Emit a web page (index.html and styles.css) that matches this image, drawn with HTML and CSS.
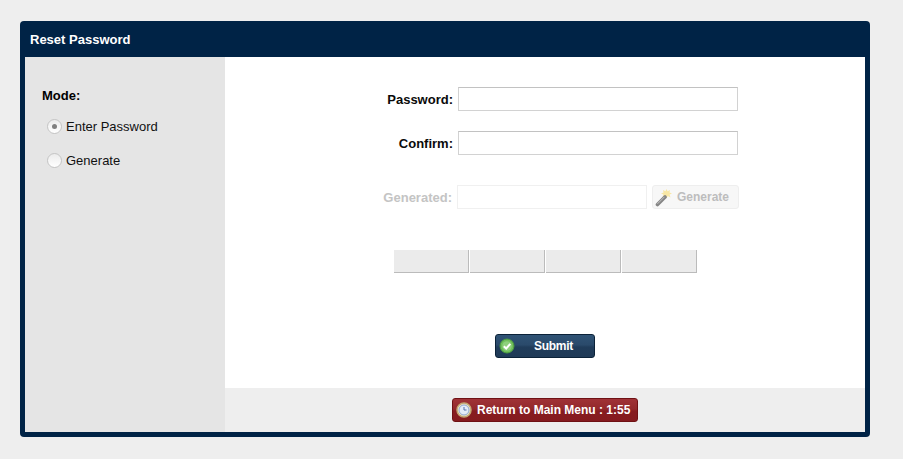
FILE: index.html
```html
<!DOCTYPE html>
<html lang="en">
<head>
    <meta charset="UTF-8">
    <meta name="viewport" content="width=device-width, initial-scale=1.0">
    <title>Reset Password</title>
    <link rel="stylesheet" href="styles.css">
</head>
<body>
    <div class="panel">
        <div class="panel-title">Reset Password</div>
        <div class="panel-body">
            <div class="side">
                <div class="mode-title">Mode:</div>
                <label class="mode-row"><span class="radio radio-on"></span>Enter Password</label>
                <label class="mode-row"><span class="radio"></span>Generate</label>
            </div>
            <div class="main">
                <div class="form">
                    <div class="row row-pass">
                        <label class="lbl">Password:</label>
                        <input class="txt" type="password">
                    </div>
                    <div class="row row-confirm">
                        <label class="lbl">Confirm:</label>
                        <input class="txt" type="password">
                    </div>
                    <div class="row row-gen">
                        <label class="lbl lbl-off">Generated:</label>
                        <input class="txt txt-off" type="text" disabled>
                        <div class="gen-btn">
                            <svg class="wand" width="18" height="18" viewBox="0 0 18 18">
                                <path d="M11.500 0 L12.600 2.200 L15 1 L14.500 3.400 L17 4.500 L14.600 5.600 L15.500 8.500 L12.800 7 L11.500 9.500 L10.200 7 L7.500 8.500 L8.400 5.600 L6 4.500 L8.500 3.400 L8 1 L10.400 2.200 Z" fill="#f8e7a4"/>
                                <path d="M2.500 15.500 L10 8" stroke="#858585" stroke-width="3.600" stroke-linecap="round"/>
                                <path d="M2.500 14.800 L9.500 7.800" stroke="#c4c4c4" stroke-width="1"/>
                            </svg>
                            <span>Generate</span>
                        </div>
                    </div>
                </div>
                <div class="meter">
                    <div class="cell"></div>
                    <div class="cell"></div>
                    <div class="cell"></div>
                    <div class="cell"></div>
                </div>
                <div class="submit-wrap">
                    <div class="btn btn-submit">
                        <svg class="btn-icon" width="16" height="16" viewBox="0 0 16 16">
                            <circle cx="8" cy="8" r="7" fill="#6fbf5a" stroke="#4b9a3f"/>
                            <circle cx="8" cy="8" r="4.800" fill="#8ed07c"/>
                            <path d="M4.800 8.200 L7.200 10.500 L11.300 5.800" fill="none" stroke="#fff" stroke-width="2"/>
                        </svg>
                        <span class="submit-text">Submit</span>
                    </div>
                </div>
                <div class="foot">
                    <div class="btn btn-return">
                        <svg class="btn-icon" width="16" height="16" viewBox="0 0 16 16">
                            <circle cx="8" cy="8" r="7" fill="#e9e2c8" stroke="#c2a873" stroke-width="1.500"/>
                            <circle cx="8" cy="8" r="5" fill="#e4ecf8" stroke="#8fa8d2"/>
                            <path d="M8 5 V8 H10.500" fill="none" stroke="#5673ab" stroke-width="1"/>
                        </svg>
                        <span>Return to Main Menu : 1:55</span>
                    </div>
                </div>
            </div>
        </div>
    </div>
</body>
</html>
```

FILE: styles.css
```css
*{
    box-sizing: border-box;
}
html, body{
    margin: 0;
    padding: 0;
    height: 100%;
}
body{
    background-color: #eeeeee;
    padding: 21px 33px 0 20px;
    font-family: "Liberation Sans", Arial, sans-serif;
    font-size: 13px;
    color: #000000;
    overflow: hidden;
}
.panel{
    width: 850px;
    height: 416px;
    display: flex;
    flex-direction: column;
    background-color: #002346;
    border-radius: 4px;
    padding: 0 5px 5px;
}
.panel-title{
    height: 36px;
    line-height: 37px;
    padding-left: 5px;
    color: #ffffff;
    font-weight: bold;
}
.panel-body{
    flex: 1;
    display: flex;
}

/* left column */
.side{
    width: 200px;
    background-color: #e5e5e5;
    padding: 30px 0 0 17px;
}
.mode-title{
    font-weight: bold;
    line-height: 18px;
}
.mode-row{
    display: flex;
    align-items: center;
    height: 16px;
    margin: 0 0 18px 5px;
    color: #111111;
}
.mode-title + .mode-row{
    margin-top: 13px;
}
.radio{
    width: 15px;
    height: 15px;
    margin-right: 4px;
    border-radius: 50%;
    border: 1px solid #c4c4c4;
    background: linear-gradient(#ececec, #ffffff);
    position: relative;
}
.radio-on::after{
    content: "";
    position: absolute;
    left: 4px;
    top: 4px;
    width: 5px;
    height: 5px;
    border-radius: 50%;
    background-color: #808080;
}

/* right column */
.main{
    flex: 1;
    display: flex;
    flex-direction: column;
    background-color: #ffffff;
}
.form{
    padding: 30px 0 0 0;
}
.row{
    display: flex;
    align-items: center;
    height: 24px;
}
.row-confirm{
    margin-top: 20px;
}
.row-gen{
    margin-top: 30px;
}
.lbl{
    width: 228px;
    text-align: right;
    font-weight: bold;
    margin-right: 5px;
    color: #0a0a0a;
}
.lbl-off{
    width: 227px;
    color: #c4c4c4;
}
.txt{
    width: 280px;
    height: 24px;
    border: 1px solid #d2d2d2;
    border-top-color: #c2c2c2;
    background-color: #ffffff;
    padding: 0;
    margin: 0;
}
.txt-off{
    width: 190px;
    border: 1px solid #f0f0f0;
}
.gen-btn{
    width: 87px;
    height: 24px;
    margin-left: 5px;
    display: flex;
    align-items: center;
    border: 1px solid #eeeeee;
    border-radius: 3px;
    background-color: #f7f7f7;
    color: #bdbdbd;
    font-weight: bold;
    font-size: 12px;
}
.wand{
    margin: 2px 4px 0 2px;
}
.meter{
    display: flex;
    gap: 1px;
    width: 303px;
    height: 23px;
    margin: 41px 0 0 169px;
}
.cell{
    flex: 1;
    background-color: #ebebeb;
    border-right: 1px solid #bbbbbb;
    border-bottom: 1px solid #bbbbbb;
}
.submit-wrap{
    display: flex;
    justify-content: center;
    margin-top: 61px;
}
.btn{
    display: flex;
    align-items: center;
    height: 24px;
    border-radius: 3px;
    color: #ffffff;
    font-weight: bold;
    font-size: 12px;
}
.btn-submit{
    width: 100px;
    padding-left: 3px;
    border: 1px solid #0b2238;
    background: linear-gradient(#2f5375 0%, #2a4a6b 45%, #203c5a 55%, #1f3a57 100%);
}
.submit-text{
    margin-left: 19px;
    letter-spacing: -0.3px;
}
.foot{
    margin-top: auto;
    height: 44px;
    background-color: #eeeeee;
    display: flex;
    justify-content: center;
    padding-top: 10px;
}
.btn-return{
    width: 186px;
    padding-left: 3px;
    border: 1px solid #6f1114;
    background: linear-gradient(#a03236 0%, #93292c 45%, #871c20 55%, #851b1f 100%);
}
.btn-return span{
    margin-left: 5px;
}
```
